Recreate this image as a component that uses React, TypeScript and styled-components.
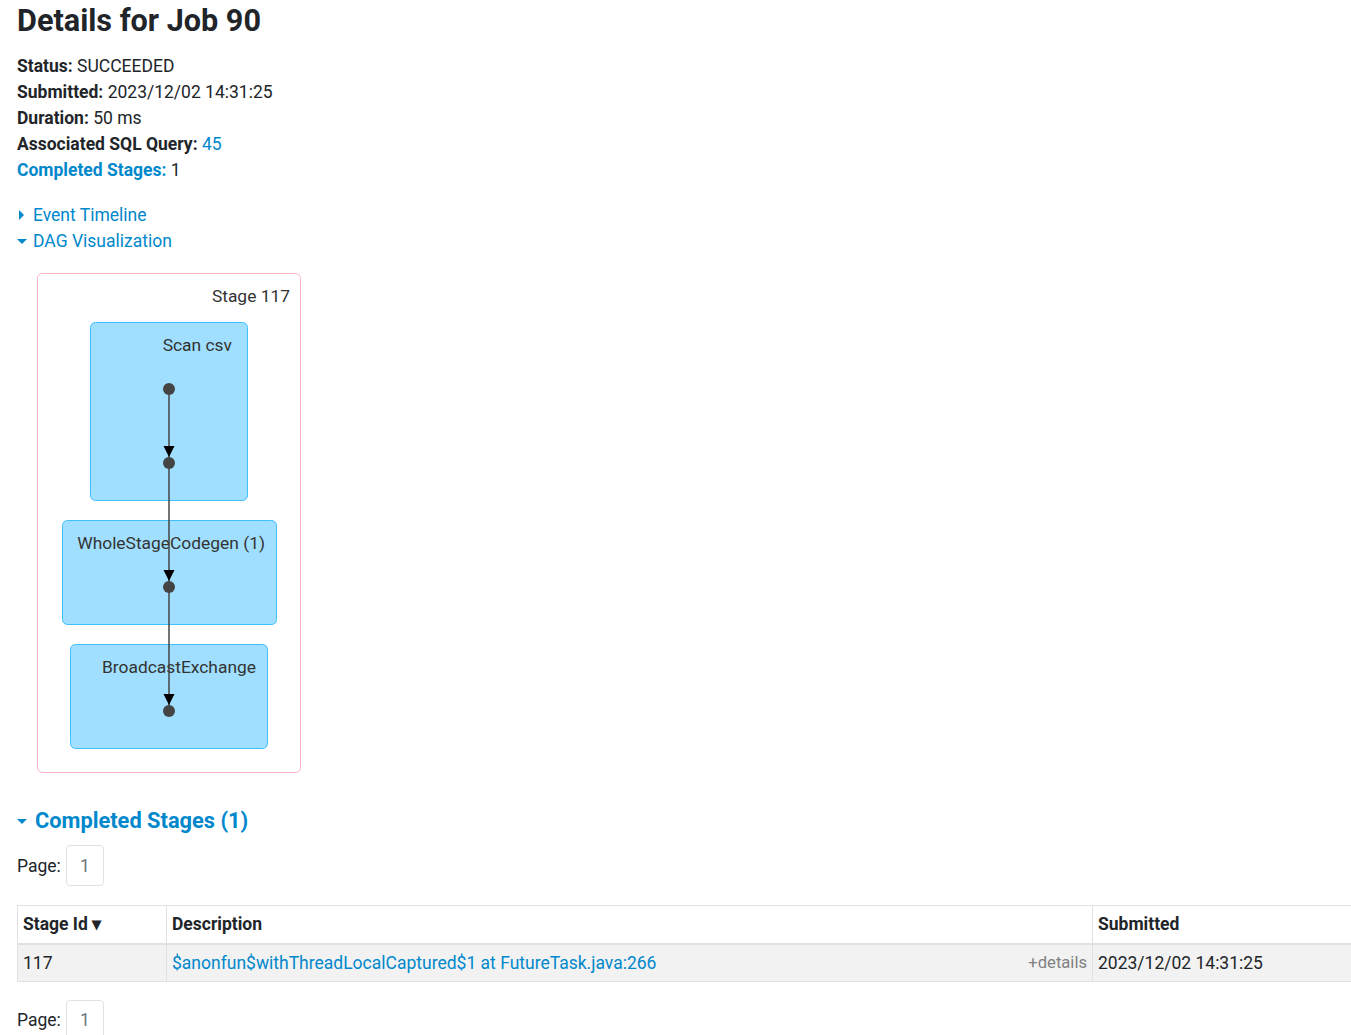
import React from "react";
import styled, { createGlobalStyle } from "styled-components";

const GlobalStyle = createGlobalStyle`
  html, body {
    margin: 0;
    padding: 0;
    background: #ffffff;
    overflow-x: hidden;
  }
  body {
    font-family: Roboto, "Liberation Sans", sans-serif;
    font-size: 17.5px;
    color: #212529;
  }
`;

const Page = styled.div`
  padding: 0 0 0 17px;
`;

const Title = styled.h3`
  margin: 0;
  padding-top: 3px;
  font-size: 30.6px;
  font-weight: 700;
  line-height: 36px;
  white-space: nowrap;
`;

const InfoList = styled.ul`
  list-style: none;
  margin: 14px 0 0;
  padding: 0;
`;

const InfoItem = styled.li`
  line-height: 26px;
`;

const Label = styled.strong`
  font-weight: 700;
`;

const Link = styled.a`
  color: #0088cc;
  text-decoration: none;
  cursor: pointer;
`;

const Toggles = styled.div`
  margin-top: 19px;
`;

const Toggle = styled.div`
  display: flex;
  align-items: center;
  height: 26px;
  color: #0088cc;
  cursor: pointer;
`;

const Caret = styled.span<{ $open?: boolean; $gap?: number }>`
  display: inline-block;
  width: 0;
  height: 0;
  margin-right: ${(p) => (p.$gap ?? (p.$open ? 6 : 9)) + "px"};
  margin-left: ${(p) => (p.$open ? "0" : "2px")};
  ${(p) =>
    p.$open
      ? `border-left: 5.5px solid transparent;
         border-right: 5.5px solid transparent;
         border-top: 5.5px solid #0088cc;`
      : `border-top: 5px solid transparent;
         border-bottom: 5px solid transparent;
         border-left: 5.5px solid #0088cc;`}
`;

const Dag = styled.svg`
  display: block;
  margin-top: 8px;
  font-family: Roboto, "Liberation Sans", sans-serif;
`;

const SectionHeading = styled.h4`
  display: flex;
  align-items: center;
  margin: 25px 0 0;
  font-size: 21.8px;
  font-weight: 700;
  line-height: 28px;
  color: #0088cc;
  cursor: pointer;
`;

const Pager = styled.div<{ $top: number }>`
  display: flex;
  align-items: center;
  gap: 5px;
  margin-top: ${(p) => p.$top}px;
`;

const PageBox = styled.span`
  display: flex;
  align-items: center;
  justify-content: center;
  box-sizing: border-box;
  width: 38px;
  height: 41px;
  border: 1px solid #dee2e6;
  border-radius: 4px;
  color: #6c757d;
`;

const TableWrap = styled.div`
  margin-top: 19px;
`;

const Table = styled.table`
  width: calc(100vw - 17px);
  border-collapse: collapse;
`;

const Th = styled.th<{ $w?: string }>`
  width: ${(p) => p.$w || "auto"};
  box-sizing: border-box;
  height: 38px;
  padding: 0 5px;
  text-align: left;
  font-weight: 700;
  border: 1px solid #dee2e6;
  border-bottom: 2px solid #dee2e6;
  border-right: none;
  &:not(:last-child) {
    border-right: 1px solid #dee2e6;
  }
`;

const Row = styled.tr`
  background: #f2f2f2;
`;

const Td = styled.td`
  height: 36px;
  padding: 0 5px;
  border: 1px solid #dee2e6;
  &:last-child {
    border-right: none;
  }
`;

const DescCell = styled.div`
  display: flex;
  align-items: center;
  justify-content: space-between;
`;

const Details = styled.span`
  font-size: 16.6px;
  color: #808080;
  cursor: pointer;
`;

const nodes = [
  { x: 90.5, y: 322.5, w: 157, h: 178, label: "Scan csv", tx: 232, ty: 351 },
  { x: 62.5, y: 520.5, w: 214, h: 104, label: "WholeStageCodegen (1)", tx: 265, ty: 549 },
  { x: 70.5, y: 644.5, w: 197, h: 104, label: "BroadcastExchange", tx: 256, ty: 673 },
];

const dots = [389, 463, 587, 711];

function DagViz() {
  return (
    <Dag width="300" height="520" viewBox="17 262 300 520">
      <rect x="37.5" y="273.5" width="263" height="499" rx="5" fill="#ffffff" stroke="#ffb3c1" strokeWidth="1" />
      <text x="290" y="302" textAnchor="end" fontSize="17.4" fill="#333333">
        Stage 117
      </text>
      {nodes.map((n) => (
        <g key={n.label}>
          <rect x={n.x} y={n.y} width={n.w} height={n.h} rx="5" fill="#a0dfff" stroke="#3ec0ff" strokeWidth="1" />
          <text x={n.tx} y={n.ty} textAnchor="end" fontSize="17.4" fill="#333333">
            {n.label}
          </text>
        </g>
      ))}
      <line x1="169" y1="389" x2="169" y2="711" stroke="#444444" strokeWidth="1.5" />
      {dots.slice(1).map((d) => (
        <path key={d} d={`M163.5 ${d - 17} L174.5 ${d - 17} L169 ${d - 6} Z`} fill="#000000" />
      ))}
      {dots.map((d) => (
        <circle key={d} cx="169" cy={d} r="6" fill="#444444" />
      ))}
    </Dag>
  );
}

function Pagination({ top }: { top: number }) {
  return (
    <Pager $top={top}>
      <span>Page:</span>
      <PageBox>1</PageBox>
    </Pager>
  );
}

export default function App() {
  return (
    <Page>
      <GlobalStyle />
      <Title>Details for Job 90</Title>
      <InfoList>
        <InfoItem>
          <Label>Status:</Label> SUCCEEDED
        </InfoItem>
        <InfoItem>
          <Label>Submitted:</Label> 2023/12/02 14:31:25
        </InfoItem>
        <InfoItem>
          <Label>Duration:</Label> 50 ms
        </InfoItem>
        <InfoItem>
          <Label>Associated SQL Query:</Label> <Link>45</Link>
        </InfoItem>
        <InfoItem>
          <Link>
            <Label>Completed Stages:</Label>
          </Link>{" "}
          1
        </InfoItem>
      </InfoList>
      <Toggles>
        <Toggle>
          <Caret />
          Event Timeline
        </Toggle>
        <Toggle>
          <Caret $open />
          DAG Visualization
        </Toggle>
      </Toggles>
      <DagViz />
      <SectionHeading>
        <Caret $open $gap={8} />
        Completed Stages (1)
      </SectionHeading>
      <Pagination top={10} />
      <TableWrap>
        <Table>
          <thead>
            <tr>
              <Th $w="149px">Stage Id ▾</Th>
              <Th $w="926px">Description</Th>
              <Th>Submitted</Th>
            </tr>
          </thead>
          <tbody>
            <Row>
              <Td>117</Td>
              <Td>
                <DescCell>
                  <Link>$anonfun$withThreadLocalCaptured$1 at FutureTask.java:266</Link>
                  <Details>+details</Details>
                </DescCell>
              </Td>
              <Td>2023/12/02 14:31:25</Td>
            </Row>
          </tbody>
        </Table>
      </TableWrap>
      <Pagination top={18} />
    </Page>
  );
}
